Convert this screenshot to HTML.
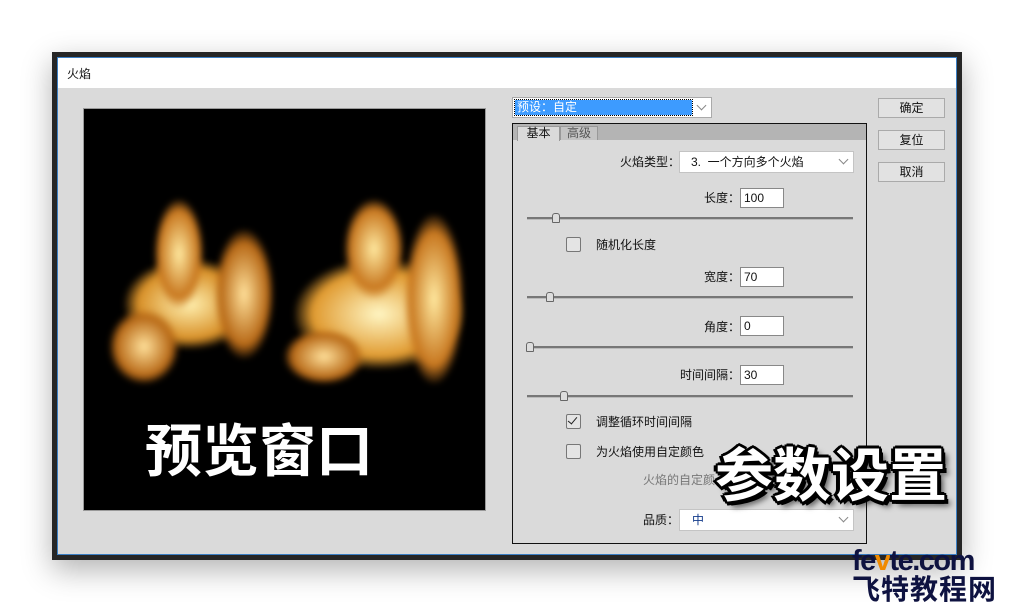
<!DOCTYPE html>
<html><head><meta charset="utf-8"><style>
body{margin:0;width:1015px;height:612px;background:#fff;position:relative;overflow:hidden;font-family:"Liberation Sans","Noto Sans CJK SC",sans-serif;font-size:12px;color:#111}
.a{position:absolute}
.inp{position:absolute;background:#fff;border:1px solid #888;height:18px;line-height:18px;padding-left:3px;box-sizing:border-box;font-size:12px}
.sel{position:absolute;background:#fff;border:1px solid #c4c4c4;box-sizing:border-box}
.chev{position:absolute;right:6px;top:4px;width:6px;height:6px;border-right:1px solid #888;border-bottom:1px solid #888;transform:rotate(45deg)}
.btn{position:absolute;left:878px;width:67px;height:20px;border:1px solid #aaa;background:#e2e2e2;box-sizing:border-box;text-align:center;line-height:18px;font-size:12px}
.track{position:absolute;left:527px;width:326px;height:2px;background:#777;border-bottom:1px solid #bbb}
.th{position:absolute;width:6px;height:8px;background:#ddd;border:1px solid #666;border-radius:3px 3px 1px 1px}
.cb{position:absolute;left:566px;width:13px;height:13px;border:1px solid #777;border-radius:2px;background:#e4e4e4}
.lbl{position:absolute;font-size:12px}
.big{position:absolute;font-weight:bold;color:#fff;text-shadow:2px 2px 0 #000,-2px -2px 0 #000,2px -2px 0 #000,-2px 2px 0 #000,3px 0 0 #000,-3px 0 0 #000,0 3px 0 #000,0 -3px 0 #000,4px 4px 0 #000,-4px 0 0 #000,0 4px 0 #000,6px 6px 6px rgba(0,0,0,.6);font-family:"Noto Sans CJK SC",sans-serif}
.f{position:absolute;border-radius:45% 45% 40% 40%;filter:blur(3px)}
</style></head><body>
<div class="a" style="left:52px;top:52px;width:910px;height:508px;box-shadow:0 10px 28px rgba(0,0,0,.3)"></div>
<div class="a" style="left:52px;top:52px;width:910px;height:508px;background:#262626"></div>
<div class="a" style="left:57px;top:57px;width:900px;height:498px;background:#dadada;border:1px solid #3b7fc4;box-sizing:border-box"></div>
<div class="a" style="left:58px;top:58px;width:898px;height:30px;background:#fff"></div>
<div class="lbl" style="left:67px;top:65px">火焰</div>
<div class="a" style="left:83px;top:108px;width:403px;height:403px;background:#000;border:1px solid #999;box-sizing:border-box;overflow:hidden">
<div class="f" style="left:40px;top:150px;width:130px;height:90px;background:radial-gradient(#fff0b0,#d89028 55%,rgba(90,30,0,0) 72%)"></div>
<div class="f" style="left:70px;top:90px;width:50px;height:110px;background:radial-gradient(#ffe9a0,#c87820 55%,rgba(90,30,0,0) 72%)"></div>
<div class="f" style="left:25px;top:200px;width:70px;height:75px;background:radial-gradient(#ffe09a,#b86a18 55%,rgba(90,30,0,0) 72%)"></div>
<div class="f" style="left:130px;top:120px;width:60px;height:130px;background:radial-gradient(#ffe09a,#b86a18 55%,rgba(90,30,0,0) 72%)"></div>
<div class="f" style="left:210px;top:150px;width:170px;height:110px;background:radial-gradient(#fff6c4,#e09a30 55%,rgba(90,30,0,0) 72%)"></div>
<div class="f" style="left:260px;top:90px;width:60px;height:100px;background:radial-gradient(#ffe9a0,#c87820 55%,rgba(90,30,0,0) 72%)"></div>
<div class="f" style="left:320px;top:105px;width:60px;height:170px;background:radial-gradient(#ffe9a0,#c87820 55%,rgba(90,30,0,0) 72%)"></div>
<div class="f" style="left:200px;top:220px;width:80px;height:55px;background:radial-gradient(#ffe09a,#b86a18 55%,rgba(90,30,0,0) 72%)"></div>
</div>
<div class="big" style="left:145px;top:412px;font-size:57px;line-height:70px">预览窗口</div>
<div class="sel" style="left:512px;top:97px;width:200px;height:21px;border-color:#aaa"><div class="a" style="left:2px;top:2px;width:175px;height:15px;background:#3d9bff;color:#fff;line-height:15px;padding-left:2px;outline:1px dotted #000">预设：自定</div><div class="chev"></div></div>
<div class="btn" style="top:98px">确定</div>
<div class="btn" style="top:130px">复位</div>
<div class="btn" style="top:162px">取消</div>
<div class="a" style="left:512px;top:123px;width:355px;height:421px;border:1px solid #111;box-sizing:border-box;background:#dadada"></div>
<div class="a" style="left:513px;top:124px;width:353px;height:16px;background:#b4b4b4"></div>
<div class="a" style="left:517px;top:126px;width:43px;height:15px;background:#dadada;border:1px solid #999;border-bottom:none;box-sizing:border-box;text-align:center;line-height:13px">基本</div>
<div class="a" style="left:560px;top:126px;width:38px;height:14px;background:#c4c4c4;border:1px solid #999;border-bottom:none;box-sizing:border-box;text-align:center;line-height:13px;color:#555">高级</div>
<div class="lbl" style="left:620px;top:153px">火焰类型：</div>
<div class="sel" style="left:679px;top:151px;width:175px;height:22px;line-height:20px;padding-left:11px">3.&nbsp; 一个方向多个火焰<div class="chev"></div></div>
<div class="lbl" style="left:704px;top:189px">长度：</div>
<div class="inp" style="left:740px;top:188px;width:44px;height:20px">100</div>
<div class="track" style="top:217px"></div><div class="th" style="left:552px;top:213px"></div>
<div class="cb" style="top:237px"></div><div class="lbl" style="left:596px;top:236px">随机化长度</div>
<div class="lbl" style="left:704px;top:268px">宽度：</div>
<div class="inp" style="left:740px;top:267px;width:44px;height:20px">70</div>
<div class="track" style="top:296px"></div><div class="th" style="left:546px;top:292px"></div>
<div class="lbl" style="left:704px;top:318px">角度：</div>
<div class="inp" style="left:740px;top:316px;width:44px;height:20px">0</div>
<div class="track" style="top:346px"></div><div class="th" style="left:526px;top:342px"></div>
<div class="lbl" style="left:680px;top:366px">时间间隔：</div>
<div class="inp" style="left:740px;top:365px;width:44px;height:20px">30</div>
<div class="track" style="top:395px"></div><div class="th" style="left:560px;top:391px"></div>
<div class="cb" style="top:414px"><div class="a" style="left:3px;top:0px;width:4px;height:8px;border-right:1.5px solid #222;border-bottom:1.5px solid #222;transform:rotate(40deg)"></div></div>
<div class="lbl" style="left:596px;top:413px">调整循环时间间隔</div>
<div class="cb" style="top:444px"></div><div class="lbl" style="left:596px;top:443px">为火焰使用自定颜色</div>
<div class="lbl" style="left:643px;top:471px;color:#777">火焰的自定颜</div>
<div class="lbl" style="left:643px;top:511px">品质：</div>
<div class="sel" style="left:679px;top:509px;width:175px;height:22px;line-height:20px;padding-left:12px;color:#123a8a">中<div class="chev"></div></div>
<div class="big" style="left:715px;top:434px;font-size:58px;line-height:74px">参数设置</div>
<div class="a" style="left:852px;top:546px;font:bold 29px 'Liberation Sans',sans-serif;color:#0e1240;letter-spacing:-1.5px;line-height:30px">fe<span style="color:#f08a00">v</span>te.com</div>
<div class="a" style="left:852px;top:573px;font:bold 28px 'Noto Sans CJK SC',sans-serif;color:#0e1240;line-height:30px;letter-spacing:1px">飞特教程网</div>
</body></html>
